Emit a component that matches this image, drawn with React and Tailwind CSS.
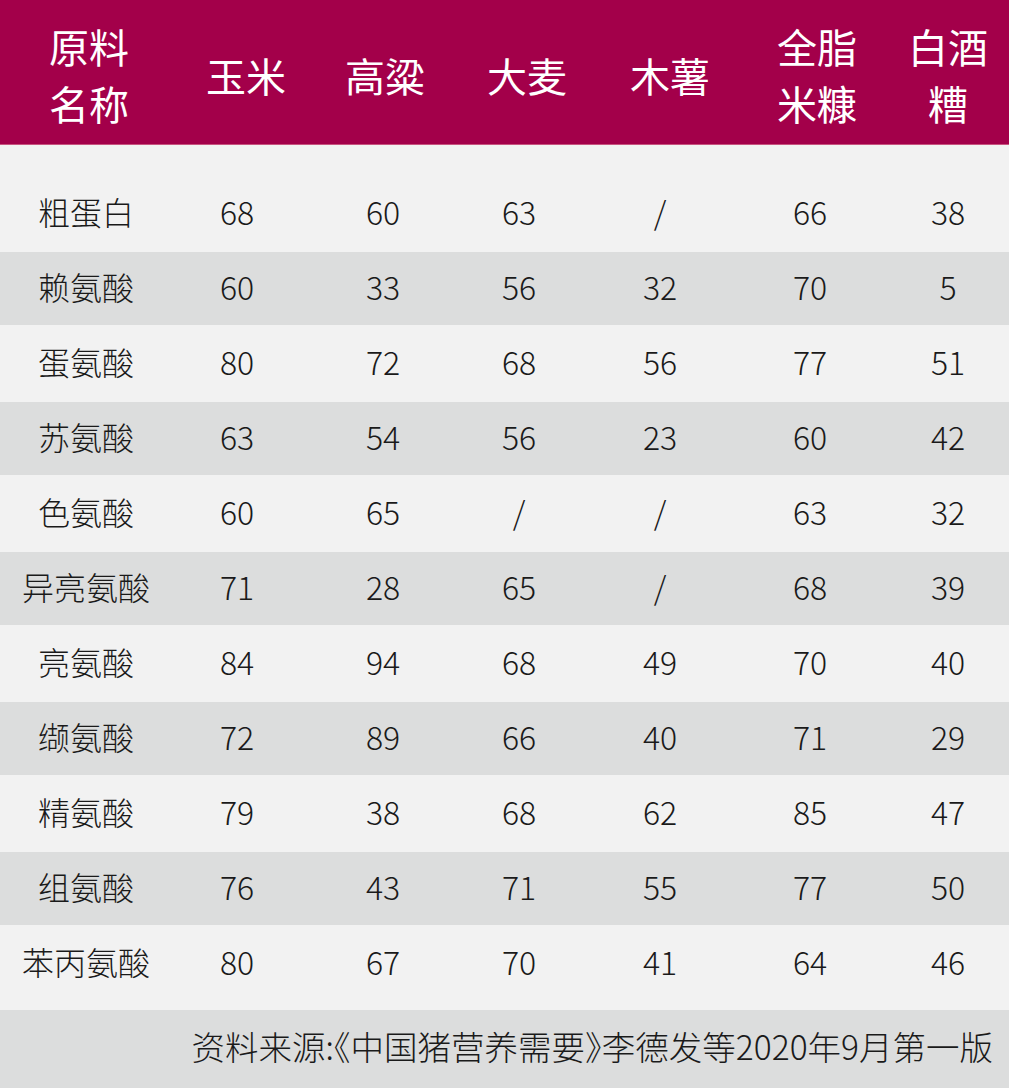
import React from 'react';

const rows = [
  ['粗蛋白', '68', '60', '63', '/', '66', '38'],
  ['赖氨酸', '60', '33', '56', '32', '70', '5'],
  ['蛋氨酸', '80', '72', '68', '56', '77', '51'],
  ['苏氨酸', '63', '54', '56', '23', '60', '42'],
  ['色氨酸', '60', '65', '/', '/', '63', '32'],
  ['异亮氨酸', '71', '28', '65', '/', '68', '39'],
  ['亮氨酸', '84', '94', '68', '49', '70', '40'],
  ['缬氨酸', '72', '89', '66', '40', '71', '29'],
  ['精氨酸', '79', '38', '68', '62', '85', '47'],
  ['组氨酸', '76', '43', '71', '55', '77', '50'],
  ['苯丙氨酸', '80', '67', '70', '41', '64', '46'],
];

const headers = [['原料', '名称'], ['玉米'], ['高粱'], ['大麦'], ['木薯'], ['全脂', '米糠'], ['白酒', '糟']];

const font = { fontFamily: '"Noto Sans CJK SC", "Noto Sans", sans-serif' };

export default function App() {
  return (
    <div className="w-[1009px] h-[1088px] bg-[#f2f2f2] flex flex-col" style={font}>
      <header className="h-[145px] bg-[#a3004a] text-white grid grid-cols-[157px_139px_142px_143px_147px_131px_120px] pl-[29px] items-center pt-[6px] border-b border-[#c8537f]">
        {headers.map((h, i) => (
          <div key={i} className="w-[120px] text-center text-[40px] leading-[57px] font-normal">
            {h.map(line => (
              <div key={line}>{line}</div>
            ))}
          </div>
        ))}
      </header>

      <main className="pt-[30px] flex-1 text-[#1a1a1a]">
        {rows.map((r, i) => (
          <div
            key={r[0]}
            className={`grid grid-cols-[151px_146px_136px_141px_150px_138px_120px] pl-[26px] items-center ${
              i % 2 === 1 ? 'bg-[#dcdddd] h-[73px]' : 'h-[77px]'
            }`}
          >
            {r.map((c, j) => (
              <div key={j} className="w-[120px] flex justify-center text-[32px] leading-none font-light whitespace-nowrap pb-[6px]">
                <span className="shrink-0">{c}</span>
              </div>
            ))}
          </div>
        ))}
      </main>

      <footer className="h-[78px] bg-[#dcdddd] flex items-center justify-end pr-[16px] pb-[6px] text-[#1a1a1a]">
        <div className="text-[33.5px] leading-none font-light whitespace-nowrap [font-feature-settings:'halt']">
          资料来源:《中国猪营养需要》李德发等2020年9月第一版
        </div>
      </footer>
    </div>
  );
}
